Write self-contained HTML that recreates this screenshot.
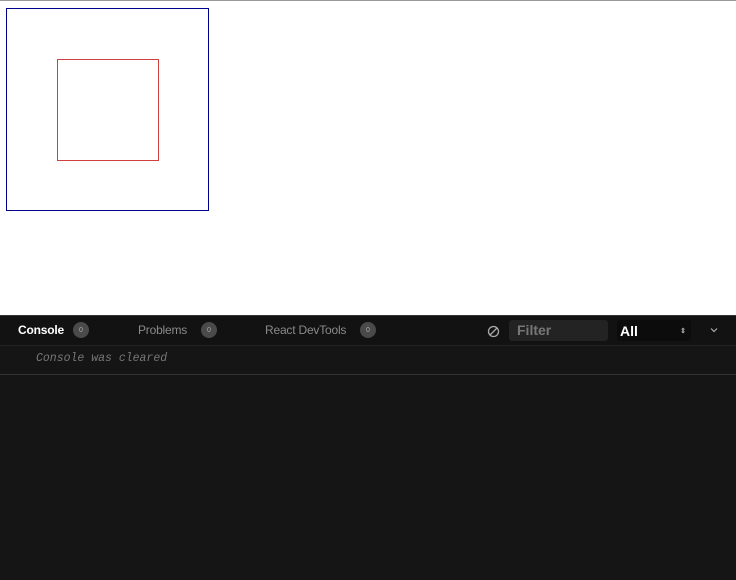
<!DOCTYPE html>
<html><head><style>
body{margin:0;width:736px;height:580px;overflow:hidden;background:#fff;font-family:"Liberation Sans",sans-serif;position:relative}
.topline{position:absolute;left:0;top:0;width:736px;height:1px;background:#999}
.outer{position:absolute;left:6px;top:8px;width:201px;height:201px;border:1px solid #00008b}
.inner{position:absolute;left:57px;top:59px;width:100px;height:100px;border:1px solid #d04040}
.panel{position:absolute;left:0;top:315px;width:736px;height:265px;background:#151515}
.bar{position:absolute;left:0;top:0;width:736px;height:29px;background:#121212;border-bottom:1px solid #222;border-top:1px solid #333}
.tab{position:absolute;top:7px;font-size:12px;color:#8a8a8a;letter-spacing:-0.2px}
.badge{position:absolute;top:6px;width:16px;height:16px;border-radius:8px;background:#4a4a4a;color:#aaa;font-size:7px;text-align:center;line-height:17px}
.msg{position:absolute;left:36px;top:37px;font-family:"Liberation Mono",monospace;font-style:italic;font-size:11.5px;color:#777}
.sep{position:absolute;left:0;top:59px;width:736px;height:1px;background:#333}
.filter{position:absolute;left:509px;top:4px;width:99px;height:21px;background:#232323;border-radius:3px;color:#777;font-size:14px;font-weight:bold;line-height:21px;padding-left:8px;box-sizing:border-box}
.sel{position:absolute;left:617px;top:4px;width:74px;height:21px;background:#0c0c0c;border-radius:3px;color:#fff;font-size:14px;font-weight:bold;line-height:23px;padding-left:3px;box-sizing:border-box}
</style></head><body>
<div class="topline"></div>
<div class="outer"></div>
<div class="inner"></div>
<div class="panel">
<div class="bar">
<div class="tab" style="left:18px;color:#fff;font-weight:bold">Console</div>
<div class="badge" style="left:73px">0</div>
<div class="tab" style="left:138px">Problems</div>
<div class="badge" style="left:201px">0</div>
<div class="tab" style="left:265px">React DevTools</div>
<div class="badge" style="left:360px">0</div>
<svg style="position:absolute;left:487px;top:9px" width="13" height="13" viewBox="0 0 13 13"><circle cx="6.5" cy="6.5" r="5" fill="none" stroke="#aaa" stroke-width="1.3"/><line x1="3" y1="10" x2="10" y2="3" stroke="#aaa" stroke-width="1.3"/></svg>
<div class="filter">Filter</div>
<div class="sel">All<span style="position:absolute;right:5px;top:0;font-size:7px;color:#aaa">&#8661;</span></div>
<svg style="position:absolute;left:710px;top:11px" width="8" height="6" viewBox="0 0 8 6"><path d="M1 1.5L4 4.5L7 1.5" fill="none" stroke="#aaa" stroke-width="1.2"/></svg>
</div>
<div class="msg">Console was cleared</div>
<div class="sep"></div>
</div>
</body></html>
